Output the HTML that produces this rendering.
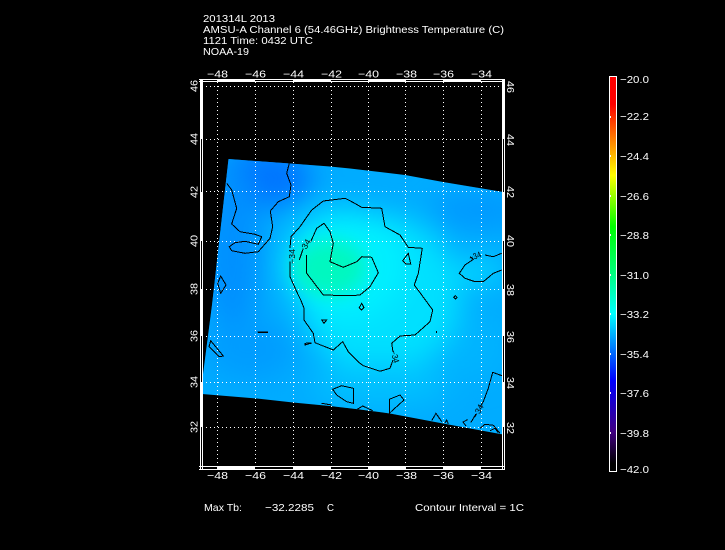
<!DOCTYPE html>
<html>
<head>
<meta charset="utf-8">
<style>
html,body{margin:0;padding:0;background:#000;width:725px;height:550px;overflow:hidden}
svg{display:block}
text{font-family:"Liberation Sans",sans-serif;font-size:10.5px;fill:#fff}
.c path,.c polygon,.c polyline{fill:none;stroke:#000;stroke-width:1}
.l text{font-size:8.5px;fill:#000}
</style>
</head>
<body>
<svg width="725" height="550" viewBox="0 0 725 550" xmlns="http://www.w3.org/2000/svg">
<defs>
<clipPath id="f"><polygon points="228.5,159 290,163.5 330,166.5 350,168.5 405,175 443,182 503,192 503,434.5 443,423.5 390,413.5 360,409.5 330,406 293,402.5 257,398.5 202,394 202,382 212,305"/></clipPath>
<filter id="b" x="-50%" y="-50%" width="200%" height="200%"><feGaussianBlur stdDeviation="14"/></filter>
<filter id="b2" x="-50%" y="-50%" width="200%" height="200%"><feGaussianBlur stdDeviation="9"/></filter>
<linearGradient id="cb" x1="0" y1="0" x2="0" y2="1">
<stop offset="0" stop-color="#ff0000"/>
<stop offset="0.07" stop-color="#ff0000"/>
<stop offset="0.25" stop-color="#ffff00"/>
<stop offset="0.38" stop-color="#00ff00"/>
<stop offset="0.5" stop-color="#00ff80"/>
<stop offset="0.6" stop-color="#00ffff"/>
<stop offset="0.77" stop-color="#0000ff"/>
<stop offset="0.9" stop-color="#400080"/>
<stop offset="0.98" stop-color="#000000"/>
<stop offset="1" stop-color="#000000"/>
</linearGradient>
</defs>

<!-- field -->
<g clip-path="url(#f)">
<rect x="195" y="150" width="315" height="295" fill="#00acff"/>
<g filter="url(#b)">
<ellipse cx="262" cy="178" rx="50" ry="30" fill="#0074ff"/>
<ellipse cx="232" cy="250" rx="28" ry="90" fill="#0090ff"/>
<ellipse cx="480" cy="210" rx="50" ry="18" fill="#0098ff"/>
<ellipse cx="250" cy="350" rx="45" ry="30" fill="#009cff"/>
<ellipse cx="470" cy="345" rx="35" ry="35" fill="#00b4ff"/>
<ellipse cx="380" cy="295" rx="80" ry="80" fill="#00e0ff"/>
<ellipse cx="345" cy="265" rx="60" ry="55" fill="#00f0ff"/>
<ellipse cx="480" cy="272" rx="25" ry="15" fill="#00d4ff"/>
<ellipse cx="380" cy="385" rx="70" ry="22" fill="#00c0ff"/>
</g>
<g filter="url(#b2)">
<ellipse cx="330" cy="268" rx="36" ry="28" fill="#00f8c0"/>
</g>
</g>

<!-- grid -->
<g stroke="#fff" stroke-width="1" stroke-dasharray="1 3" shape-rendering="crispEdges">
<path d="M217.5 82V466M255.5 82V466M293.5 82V466M331.5 82V466M368.5 82V466M405.5 82V466M443.5 82V466M481.5 82V466"/>
<path d="M202 86.5H502M202 139.5H502M202 191.5H502M202 241.5H502M202 289.5H502M202 336.5H502M202 382.5H502M202 427.5H502"/>
</g>

<!-- contours -->
<g class="c" shape-rendering="crispEdges">
<polyline points="289.3,163.3 286.7,173.3 291,185 289.3,196.7 278.3,201.7 270.3,211 272.7,226.7 270,238.3 258.3,251.7 245,253.3 231.7,250.7 229.3,246.7 235,242.7 245,241.3 258.3,244.3 261.7,236.7 255,234.3 240,231.7 231.7,224 236.7,208.3 231.7,190 226.7,183.3"/>
<polyline points="290,261.7 290,276.7 296.7,291.7 300.7,300 304,308 304,320 313.3,333.3 315,342.7 333.3,350 342.7,341.7 348.3,351.7 360,363.3 363.3,365.7 380,371.3 390,368.3 393,360"/>
<polyline points="393,352 391.7,343.3 400,336 415,335 430,321.7 432.7,310 421.7,295 414.3,285 418.3,273.3 422.3,248.3 408.3,247.3 400,235 385,226.7 381.7,208.3 361.7,207.3 350,200.7 345,198.3 323.3,201 311.7,210 300,226.7 291,236.7 290,248"/>
<polyline points="299.3,260 303.3,248.3"/>
<polyline points="310.7,241.7 316.7,228.3 324,223.3 330,231.7 333.3,243.3 330,261.7 343.3,267.3 356.7,261.7 361.7,256.7 371.7,257.3 378.3,272.7 370,286.7 360,295 350,295.7 323.3,295 306.7,273.3 306.7,255"/>
<polygon points="220.7,276 226,285 220.7,293.3 217.7,283.3"/>
<polygon points="408.3,253.3 410.7,264 406,264 402.7,260.7"/>
<polyline points="501.7,253.3 493.3,256.7 485,255"/>
<polyline points="470,256.7 473.3,259.3 465,265 459.3,273.3 465,278.3 475,281.7 483.3,281.7 493.3,273.3 501.7,270"/>
<polygon points="455.3,295.5 457,297.3 455.3,299 453.6,297.3"/>
<polygon points="361.7,303.3 364,307.7 361.7,310 359.3,307.7"/>
<polygon points="321.7,320 326.7,320 324,323.3"/>
<path d="M257.5 332H268M258 332.7H268" />
<polygon points="305,343.3 311.7,343 305,345"/>
<polygon points="210.7,340.7 223.3,356 219.3,356.7 209,346.7"/>
<polygon points="332.7,389.3 341.7,385.7 353.3,388.3 353.3,403.3 346.7,401.7 336.7,395"/>
<polyline points="321.7,403.3 331.7,405"/>
<polygon points="389.3,413.3 389.3,399.3 400,395 404,400"/>
<polyline points="357.3,409.3 362.7,406 372.7,410.7"/>
<polyline points="431.7,420.7 436,413.3 441.7,421.7"/>
<polyline points="445,423 446.7,420 448.3,424"/>
<polyline points="466,426 463,422 467,420 467,419"/>
<polyline points="470.7,422.7 476,414"/>
<polyline points="480,407 483.3,401.7 488.3,388.3 492.7,372.3 502.7,376"/>
<polyline points="480,428.3 485,424.3 493.3,425.3 500,433.3"/>
<polyline points="490,430.7 495,428.3 498.3,432.7"/>
<path d="M436.5 331V333"/>
</g>
<g class="l">
<text transform="translate(292,258) rotate(-90)" textLength="15" lengthAdjust="spacingAndGlyphs" x="-6" y="3">−34</text>
<text transform="translate(306,244) rotate(-60)" x="-5" y="3" textLength="10" lengthAdjust="spacingAndGlyphs">34</text>
<text transform="translate(475,256) rotate(-20)" x="-6" y="3" textLength="12" lengthAdjust="spacingAndGlyphs">−34</text>
<text transform="translate(395,356) rotate(75)" x="-6" y="3" textLength="13" lengthAdjust="spacingAndGlyphs">−34</text>
<text transform="translate(478,411) rotate(-62)" x="-7" y="3" textLength="14" lengthAdjust="spacingAndGlyphs">−34</text>
</g>

<!-- frame -->
<g fill="#fff" shape-rendering="crispEdges">
<rect x="199" y="79" width="306" height="1"/>
<rect x="199" y="81" width="306" height="1"/>
<rect x="199" y="469" width="306" height="1"/>
<rect x="199" y="466" width="306" height="1"/>
<rect x="200" y="79" width="1" height="391"/>
<rect x="202" y="79" width="1" height="391"/>
<rect x="502" y="79" width="1" height="391"/>
<rect x="504" y="79" width="1" height="391"/>
<rect x="217" y="79" width="38" height="3"/>
<rect x="293" y="79" width="38" height="3"/>
<rect x="368" y="79" width="38" height="3"/>
<rect x="443" y="79" width="38" height="3"/>
<rect x="217" y="466" width="38" height="4"/>
<rect x="293" y="466" width="38" height="4"/>
<rect x="368" y="466" width="38" height="4"/>
<rect x="443" y="466" width="38" height="4"/>
<rect x="200" y="79" width="3" height="60"/>
<rect x="200" y="192" width="3" height="49"/>
<rect x="200" y="289" width="3" height="47"/>
<rect x="200" y="382" width="3" height="45"/>
<rect x="502" y="79" width="3" height="60"/>
<rect x="502" y="192" width="3" height="49"/>
<rect x="502" y="289" width="3" height="47"/>
<rect x="502" y="382" width="3" height="45"/>
</g>

<!-- header text -->
<text x="203" y="22" textLength="72" lengthAdjust="spacingAndGlyphs">201314L 2013</text>
<text x="203" y="33" textLength="301" lengthAdjust="spacingAndGlyphs">AMSU-A Channel 6 (54.46GHz) Brightness Temperature (C)</text>
<text x="203" y="44" textLength="110" lengthAdjust="spacingAndGlyphs">1121 Time: 0432 UTC</text>
<text x="203" y="55" textLength="46" lengthAdjust="spacingAndGlyphs">NOAA-19</text>

<!-- top labels -->
<g>
<text x="207" y="77.5" textLength="21" lengthAdjust="spacingAndGlyphs">−48</text>
<text x="245" y="77.5" textLength="21" lengthAdjust="spacingAndGlyphs">−46</text>
<text x="283" y="77.5" textLength="21" lengthAdjust="spacingAndGlyphs">−44</text>
<text x="321" y="77.5" textLength="21" lengthAdjust="spacingAndGlyphs">−42</text>
<text x="358" y="77.5" textLength="21" lengthAdjust="spacingAndGlyphs">−40</text>
<text x="396" y="77.5" textLength="21" lengthAdjust="spacingAndGlyphs">−38</text>
<text x="433" y="77.5" textLength="21" lengthAdjust="spacingAndGlyphs">−36</text>
<text x="471" y="77.5" textLength="21" lengthAdjust="spacingAndGlyphs">−34</text>
</g>
<!-- bottom labels -->
<g>
<text x="207" y="479" textLength="21" lengthAdjust="spacingAndGlyphs">−48</text>
<text x="245" y="479" textLength="21" lengthAdjust="spacingAndGlyphs">−46</text>
<text x="283" y="479" textLength="21" lengthAdjust="spacingAndGlyphs">−44</text>
<text x="321" y="479" textLength="21" lengthAdjust="spacingAndGlyphs">−42</text>
<text x="358" y="479" textLength="21" lengthAdjust="spacingAndGlyphs">−40</text>
<text x="396" y="479" textLength="21" lengthAdjust="spacingAndGlyphs">−38</text>
<text x="433" y="479" textLength="21" lengthAdjust="spacingAndGlyphs">−36</text>
<text x="471" y="479" textLength="21" lengthAdjust="spacingAndGlyphs">−34</text>
</g>
<!-- left labels -->
<g>
<text transform="translate(197.5,92) rotate(-90)" textLength="12" lengthAdjust="spacingAndGlyphs">46</text>
<text transform="translate(197.5,145) rotate(-90)" textLength="12" lengthAdjust="spacingAndGlyphs">44</text>
<text transform="translate(197.5,198) rotate(-90)" textLength="12" lengthAdjust="spacingAndGlyphs">42</text>
<text transform="translate(197.5,247) rotate(-90)" textLength="12" lengthAdjust="spacingAndGlyphs">40</text>
<text transform="translate(197.5,295) rotate(-90)" textLength="12" lengthAdjust="spacingAndGlyphs">38</text>
<text transform="translate(197.5,342) rotate(-90)" textLength="12" lengthAdjust="spacingAndGlyphs">36</text>
<text transform="translate(197.5,388) rotate(-90)" textLength="12" lengthAdjust="spacingAndGlyphs">34</text>
<text transform="translate(197.5,433) rotate(-90)" textLength="12" lengthAdjust="spacingAndGlyphs">32</text>
</g>
<!-- right labels -->
<g>
<text transform="translate(507,81) rotate(90)" textLength="12" lengthAdjust="spacingAndGlyphs">46</text>
<text transform="translate(507,134) rotate(90)" textLength="12" lengthAdjust="spacingAndGlyphs">44</text>
<text transform="translate(507,186) rotate(90)" textLength="12" lengthAdjust="spacingAndGlyphs">42</text>
<text transform="translate(507,235) rotate(90)" textLength="12" lengthAdjust="spacingAndGlyphs">40</text>
<text transform="translate(507,284) rotate(90)" textLength="12" lengthAdjust="spacingAndGlyphs">38</text>
<text transform="translate(507,331) rotate(90)" textLength="12" lengthAdjust="spacingAndGlyphs">36</text>
<text transform="translate(507,377) rotate(90)" textLength="12" lengthAdjust="spacingAndGlyphs">34</text>
<text transform="translate(507,422) rotate(90)" textLength="12" lengthAdjust="spacingAndGlyphs">32</text>
</g>

<!-- colour bar -->
<rect x="609.5" y="76.5" width="7" height="395" fill="url(#cb)" stroke="#fff" stroke-width="1" shape-rendering="crispEdges"/>
<g fill="#fff" shape-rendering="crispEdges">
<rect x="610" y="116" width="1" height="2"/>
<rect x="610" y="155" width="1" height="2"/>
<rect x="610" y="195" width="1" height="2"/>
<rect x="610" y="234" width="1" height="2"/>
<rect x="610" y="274" width="1" height="2"/>
<rect x="610" y="313" width="1" height="2"/>
<rect x="610" y="353" width="1" height="2"/>
<rect x="610" y="392" width="1" height="2"/>
<rect x="610" y="432" width="1" height="2"/>
</g>
<g>
<text x="620" y="83" textLength="29" lengthAdjust="spacingAndGlyphs">−20.0</text>
<text x="620" y="120" textLength="29" lengthAdjust="spacingAndGlyphs">−22.2</text>
<text x="620" y="160" textLength="29" lengthAdjust="spacingAndGlyphs">−24.4</text>
<text x="620" y="200" textLength="29" lengthAdjust="spacingAndGlyphs">−26.6</text>
<text x="620" y="239" textLength="29" lengthAdjust="spacingAndGlyphs">−28.8</text>
<text x="620" y="279" textLength="29" lengthAdjust="spacingAndGlyphs">−31.0</text>
<text x="620" y="318" textLength="29" lengthAdjust="spacingAndGlyphs">−33.2</text>
<text x="620" y="358" textLength="29" lengthAdjust="spacingAndGlyphs">−35.4</text>
<text x="620" y="397" textLength="29" lengthAdjust="spacingAndGlyphs">−37.6</text>
<text x="620" y="437" textLength="29" lengthAdjust="spacingAndGlyphs">−39.8</text>
<text x="620" y="473" textLength="29" lengthAdjust="spacingAndGlyphs">−42.0</text>
</g>

<!-- footer -->
<text x="204" y="511" textLength="38" lengthAdjust="spacingAndGlyphs">Max Tb:</text>
<text x="265" y="511" textLength="49" lengthAdjust="spacingAndGlyphs">−32.2285</text>
<text x="327" y="511" textLength="7" lengthAdjust="spacingAndGlyphs">C</text>
<text x="415" y="511" textLength="109" lengthAdjust="spacingAndGlyphs">Contour Interval = 1C</text>
</svg>
</body>
</html>
